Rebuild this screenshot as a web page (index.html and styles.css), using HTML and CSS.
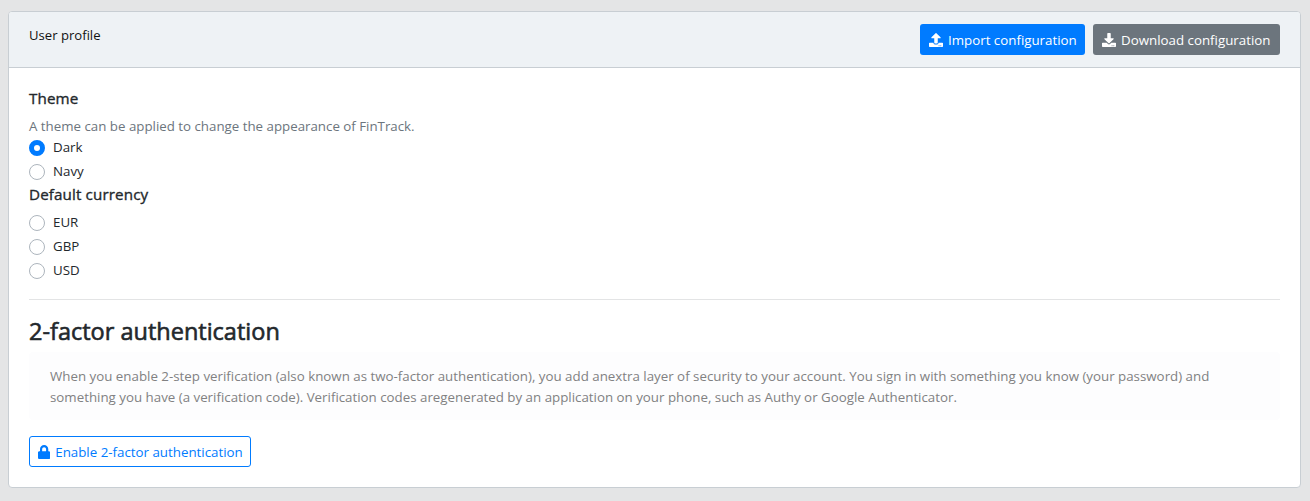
FILE: index.html
```
<!DOCTYPE html>
<html lang="en">
<head>
<meta charset="utf-8">
<title>User profile</title>
<link rel="stylesheet" href="styles.css">
</head>
<body>
<main class="card">
  <header class="card-header">
    <span class="card-title">User profile</span>
    <div class="actions">
      <button class="btn btn-primary"><svg class="icon" viewBox="0 0 512 512"><path d="M296 384h-80c-13.3 0-24-10.7-24-24V192h-87.7c-17.8 0-26.7-21.5-14.1-34.1L242.3 5.7c7.5-7.5 19.8-7.5 27.3 0l152.2 152.2c12.6 12.6 3.7 34.1-14.1 34.1H320v168c0 13.3-10.7 24-24 24zm216-8v112c0 13.3-10.7 24-24 24H24c-13.3 0-24-10.7-24-24V376c0-13.3 10.7-24 24-24h136v8c0 30.9 25.1 56 56 56h80c30.9 0 56-25.1 56-56v-8h136c13.3 0 24 10.7 24 24zm-124 88c0-11-9-20-20-20s-20 9-20 20 9 20 20 20 20-9 20-20zm64 0c0-11-9-20-20-20s-20 9-20 20 9 20 20 20 20-9 20-20z"/></svg><span class="btn-label">Import configuration</span></button>
      <button class="btn btn-secondary"><svg class="icon" viewBox="0 0 512 512"><path d="M216 0h80c13.3 0 24 10.7 24 24v168h87.7c17.8 0 26.7 21.5 14.1 34.1L269.7 378.3c-7.5 7.5-19.8 7.5-27.3 0L90.1 226.1c-12.6-12.6-3.7-34.1 14.1-34.1H192V24c0-13.3 10.7-24 24-24zm296 376v112c0 13.3-10.7 24-24 24H24c-13.3 0-24-10.7-24-24V376c0-13.3 10.7-24 24-24h146.7l49 49c20.1 20.1 52.5 20.1 72.6 0l49-49H488c13.3 0 24 10.7 24 24zm-124 88c0-11-9-20-20-20s-20 9-20 20 9 20 20 20 20-9 20-20zm64 0c0-11-9-20-20-20s-20 9-20 20 9 20 20 20 20-9 20-20z"/></svg><span class="btn-label">Download configuration</span></button>
    </div>
  </header>
  <div class="card-body">
    <h5 class="heading theme-heading">Theme</h5>
    <p class="description">A theme can be applied to change the appearance of FinTrack.</p>
    <label class="radio"><input class="radio-input" type="radio" name="theme" checked><span>Dark</span></label>
    <label class="radio"><input class="radio-input" type="radio" name="theme"><span>Navy</span></label>
    <h5 class="heading currency-heading">Default currency</h5>
    <label class="radio"><input class="radio-input" type="radio" name="currency"><span>EUR</span></label>
    <label class="radio"><input class="radio-input" type="radio" name="currency"><span>GBP</span></label>
    <label class="radio"><input class="radio-input" type="radio" name="currency"><span>USD</span></label>
    <hr class="divider">
    <h3 class="section-title">2-factor authentication</h3>
    <div class="notice">When you enable 2-step verification (also known as two-factor authentication), you add anextra layer of security to your account. You sign in with something you know (your password) and<br>something you have (a verification code). Verification codes aregenerated by an application on your phone, such as Authy or Google Authenticator.</div>
    <button class="btn btn-outline"><svg class="icon icon-lock" viewBox="0 0 448 512"><path d="M400 224h-24v-72C376 68.2 307.8 0 224 0S72 68.2 72 152v72H48c-26.5 0-48 21.5-48 48v192c0 26.5 21.5 48 48 48h352c26.5 0 48-21.5 48-48V272c0-26.5-21.5-48-48-48zm-104 0H152v-72c0-39.7 32.3-72 72-72s72 32.3 72 72v72z"/></svg><span class="btn-label">Enable 2-factor authentication</span></button>
  </div>
</main>
</body>
</html>
```
FILE: styles.css
```
* { box-sizing: border-box; }
body {
  margin: 0;
  padding: 11px 9px 0 8px;
  background: #e4e5e6;
  color: #23282c;
  font-family: "Open Sans", "Noto Sans", sans-serif;
  font-size: 13.32px;
  line-height: 21px;
  overflow: hidden;
}
.card {
  height: 477px;
  border: 1px solid #c8ced3;
  border-radius: 4px;
  background: #fff;
  overflow: hidden;
}
.card-header {
  display: flex;
  justify-content: space-between;
  align-items: flex-start;
  height: 56px;
  padding: 12px 20px;
  border-bottom: 1px solid #c8ced3;
  background: #eef2f5;
}
.card-title { padding-top: 1px; font-size: 13.1px; color: #111; }
.actions { display: flex; gap: 8px; }
.btn {
  display: inline-flex;
  align-items: center;
  height: 31px;
  padding: 0 8px;
  border: 1px solid transparent;
  border-radius: 3px;
  color: #fff;
  font: inherit;
  white-space: nowrap;
}
.btn-label { padding-top: 2px; }
.btn-primary { width: 165px; background: #007bff; }
.btn-secondary { width: 187px; background: #6c757d; }
.btn-outline { width: 222px; border-color: #007bff; background: #fff; color: #007bff; }
.icon { flex: none; width: 14px; height: 14px; margin-right: 5px; fill: currentColor; }
.icon-lock { width: 12.25px; }
.card-body { padding: 20px; }
.heading {
  margin: 0 0 8px;
  font-size: 15.2px;
  font-weight: 400;
  letter-spacing: 0.12px;
  line-height: 20px;
  -webkit-text-stroke: 0.35px currentColor;
}
.currency-heading { margin: -1px 0 8px; }
.description { margin: 0; font-size: 13.3px; color: #6c757d; }
.radio { display: flex; height: 24px; gap: 8px; }
.radio-input {
  appearance: none;
  flex: none;
  width: 16px;
  height: 16px;
  margin: 3px 0 0;
  border: 1px solid #adb5bd;
  border-radius: 50%;
  background: #fff;
}
.radio-input:checked { border: 5px solid #007bff; }
.divider { height: 1px; margin: 15px 0 16px; border: 0; background: #e3e4e5; }
.section-title {
  margin: 0 0 6px;
  font-size: 23.5px;
  font-weight: 400;
  line-height: 30px;
  -webkit-text-stroke: 0.6px currentColor;
}
.notice {
  height: 68px;
  margin-bottom: 16px;
  padding: 14px 21px 12px;
  border-radius: 4px;
  background: #fdfdfe;
  color: #818182;
  white-space: nowrap;
}
```
